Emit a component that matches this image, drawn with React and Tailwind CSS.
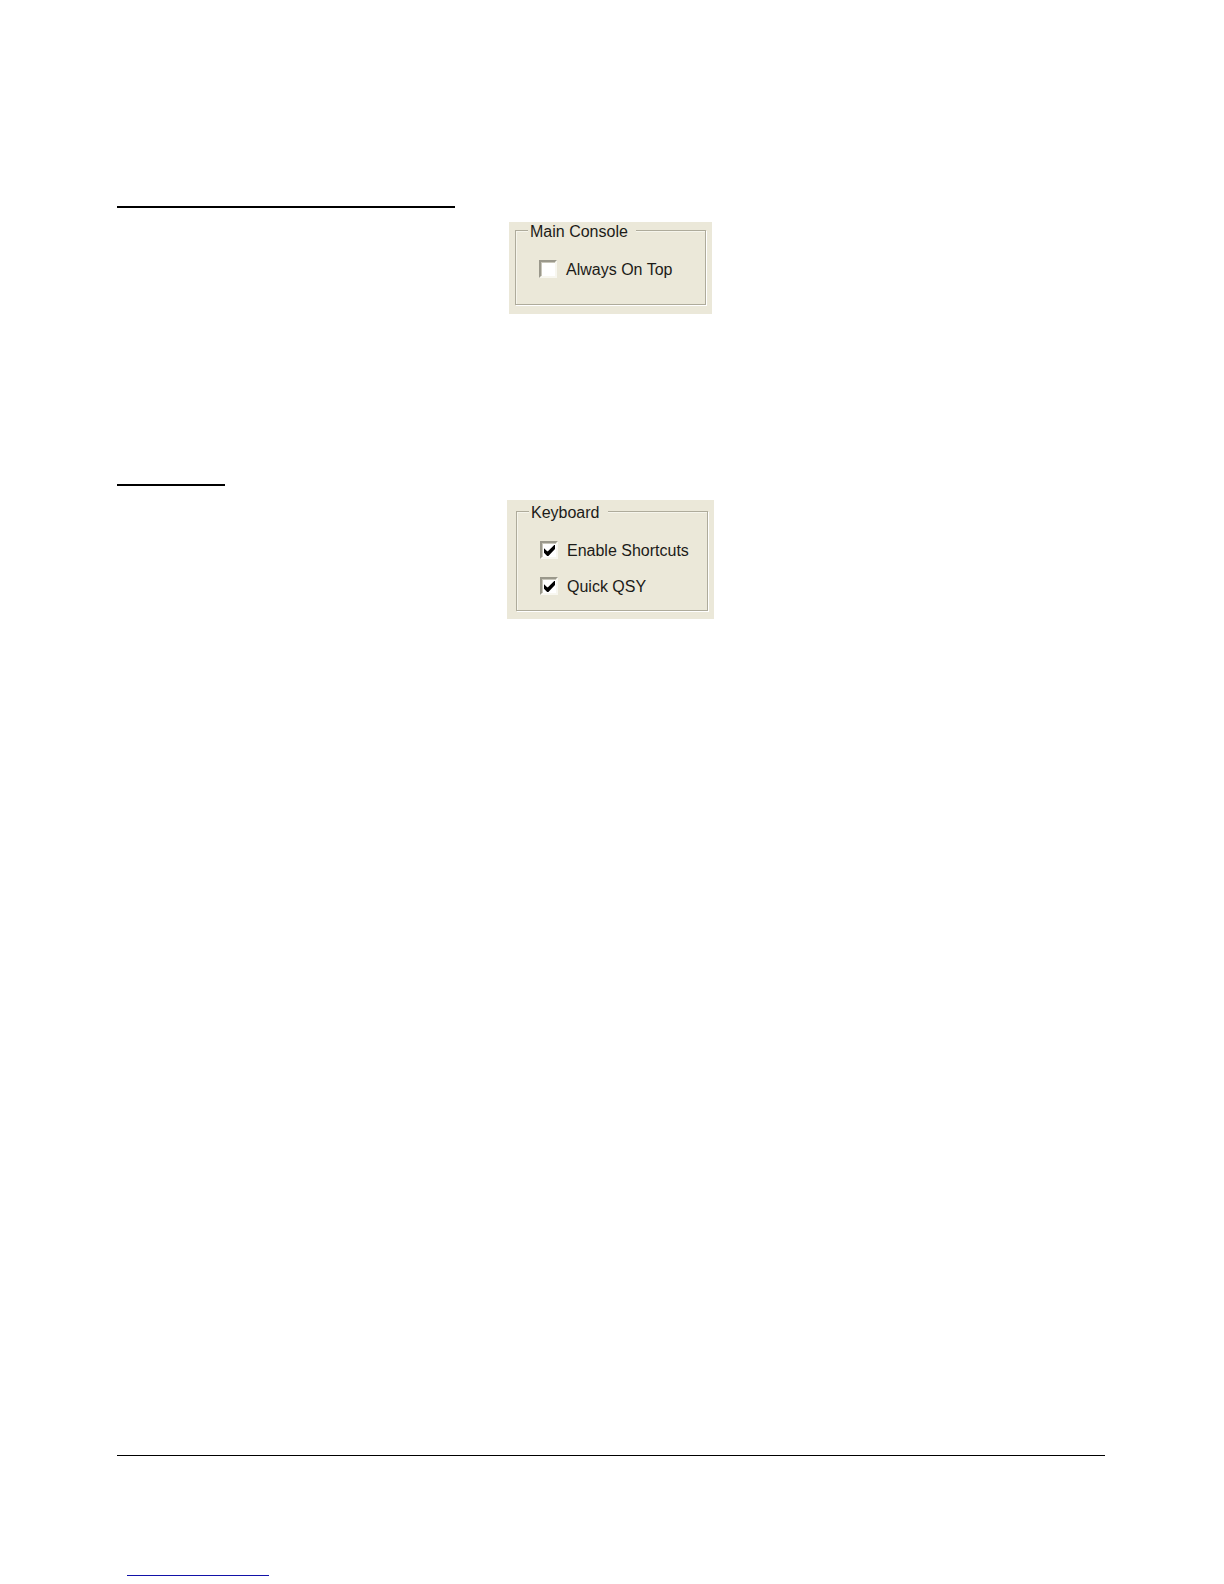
import React from 'react';
import { clsx } from 'clsx';

const CheckOption = ({ id, label, defaultChecked = false }) => (
    <div className="flex items-center gap-[9px]">
        <span className="relative flex size-[18px] shrink-0">
            <input
                id={id}
                type="checkbox"
                defaultChecked={defaultChecked}
                className="peer size-full appearance-none border-2 border-t-[#9a988b] border-l-[#9a988b] border-r-[#f8f7f0] border-b-[#f8f7f0] bg-white shadow-[inset_1px_1px_0_#c9c7bb]"
            />
            <svg
                viewBox="0 0 7 7"
                className="pointer-events-none absolute top-1 left-1 hidden size-[11px] fill-black peer-checked:block"
                aria-hidden="true"
            >
                <path d="M0 2 L2 4 L2.5 4 L6.5 0 L7 0 L7 2.5 L2.8 7 L2 7 L0 5 Z" />
            </svg>
        </span>
        <label htmlFor={id} className="pt-0.5 leading-4 whitespace-nowrap">
            {label}
        </label>
    </div>
);

const GroupPanel = ({ title, className, fieldsetClassName, children }) => (
    <section className={clsx('mx-auto bg-[#ebe8d9]', className)}>
        <fieldset
            className={clsx(
                'min-w-0 border border-[#aeab9b] pt-[22px] pl-[23px]',
                'shadow-[1px_1px_0_#fff,inset_1px_1px_0_#f6f5ec]',
                fieldsetClassName
            )}
        >
            <legend className="-ml-[11px] bg-[#ebe8d9] pt-1 pr-2 pl-0.5 leading-3">{title}</legend>
            {children}
        </fieldset>
    </section>
);

const App = () => (
    <div className="flex min-h-screen flex-col bg-white pt-[206px] pr-[119px] pb-2 pl-[117px] font-['Liberation_Sans',Arial,sans-serif] text-base text-[#1c1b18]">
        <main className="pr-px">
            {/* Main console options */}
            <hr className="w-[338px] border-t-2 border-black" />
            <GroupPanel
                title="Main Console"
                className="mt-[14px] w-[203px] pr-1.5 pb-[9px] pl-1.5"
                fieldsetClassName="pb-[26px]"
            >
                <CheckOption id="always-on-top" label="Always On Top" />
            </GroupPanel>

            {/* Keyboard options */}
            <hr className="mt-[170px] w-[108px] border-t-2 border-black" />
            <GroupPanel
                title="Keyboard"
                className="mt-[14px] w-[207px] pt-[3px] pr-1.5 pb-2 pl-[9px]"
                fieldsetClassName="flex flex-col gap-[18px] pb-[15px]"
            >
                <CheckOption id="enable-shortcuts" label="Enable Shortcuts" defaultChecked />
                <CheckOption id="quick-qsy" label="Quick QSY" defaultChecked />
            </GroupPanel>
        </main>

        <footer className="mt-auto">
            <hr className="border-t border-black" />
            <hr className="mt-[119px] ml-2.5 w-[142px] border-t border-[#1212a8]" />
        </footer>
    </div>
);

export default App;
